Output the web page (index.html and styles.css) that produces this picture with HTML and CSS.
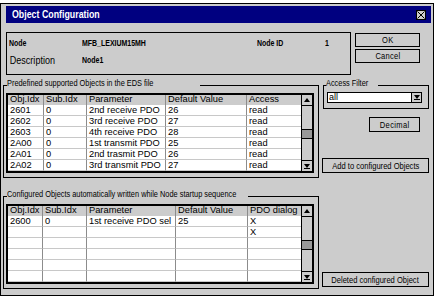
FILE: index.html
```html
<!DOCTYPE html>
<html>
<head>
<meta charset="utf-8">
<link rel="stylesheet" href="styles.css">
</head>
<body>
<div class="window">
  <div class="titlebar">
    <span class="title nx">Object Configuration</span>
    <span class="close"><svg width="8" height="8" viewBox="0 0 8 8"><path d="M0.5 0.5L7.5 7.5M7.5 0.5L0.5 7.5" stroke="#000" stroke-width="1" fill="none"/></svg></span>
  </div>

  <div class="row row-info">
    <div class="infobox">
      <span class="b nx">Node</span><span class="b nx">MFB_LEXIUM15MH</span><span class="b nx">Node ID</span><span class="b nx">1</span>
      <span class="desc nx">Description</span><span class="b nx">Node1</span>
    </div>
    <div class="btncol">
      <button class="btn btn-sm"><span>OK</span></button>
      <button class="btn btn-sm"><span>Cancel</span></button>
    </div>
  </div>

  <div class="row row-pre">
    <fieldset class="group group-main">
      <legend class="lg-pre"><span class="lg-text">Predefined supported Objects in the EDS file</span></legend>
      <div class="table">
        <div class="grid grid-pre">
          <div class="c h">Obj.Idx</div><div class="c h">Sub.Idx</div><div class="c h">Parameter</div><div class="c h">Default Value</div><div class="c h">Access</div>
          <div class="c">2601</div><div class="c">0</div><div class="c">2nd receive PDO</div><div class="c">26</div><div class="c">read</div>
          <div class="c">2602</div><div class="c">0</div><div class="c">3rd receive PDO</div><div class="c">27</div><div class="c">read</div>
          <div class="c">2603</div><div class="c">0</div><div class="c">4th receive PDO</div><div class="c">28</div><div class="c">read</div>
          <div class="c">2A00</div><div class="c">0</div><div class="c">1st transmit PDO</div><div class="c">25</div><div class="c">read</div>
          <div class="c">2A01</div><div class="c">0</div><div class="c">2nd trasmit PDO</div><div class="c">26</div><div class="c">read</div>
          <div class="c">2A02</div><div class="c">0</div><div class="c">3rd transmit PDO</div><div class="c">27</div><div class="c">read</div>
        </div>
        <div class="sb">
          <div class="sb-btn"><svg width="6" height="4" viewBox="0 0 6 4"><path d="M3 0L6 4H0Z" fill="#000"/></svg></div>
          <div class="sb-thumb"></div>
          <div class="sb-btn sb-down"><svg width="6" height="5" viewBox="0 0 6 5"><path d="M0 0H6L3 4Z" fill="#000"/><path d="M0 4.5H6" stroke="#000"/></svg></div>
        </div>
      </div>
    </fieldset>
    <div class="side">
      <fieldset class="group group-filter">
        <legend class="lg-filter"><span class="lg-text">Access Filter</span></legend>
        <div class="combo"><span class="combo-text">all</span><span class="drop"><svg width="6" height="5" viewBox="0 0 6 5"><path d="M0 0H6L3 4Z" fill="#000"/><path d="M0 4.5H6" stroke="#000"/></svg></span></div>
      </fieldset>
      <button class="btn btn-dec"><span>Decimal</span></button>
      <button class="btn btn-wide btn-add"><span>Add to configured Objects</span></button>
    </div>
  </div>

  <div class="row row-cfg">
    <fieldset class="group group-main">
      <legend class="lg-cfg"><span class="lg-text">Configured Objects automatically written while Node startup sequence</span></legend>
      <div class="table">
        <div class="grid grid-cfg">
          <div class="c h">Obj.Idx</div><div class="c h">Sub.Idx</div><div class="c h">Parameter</div><div class="c h">Default Value</div><div class="c h">PDO dialog</div>
          <div class="c">2600</div><div class="c">0</div><div class="c">1st receive PDO sel</div><div class="c">25</div><div class="c">X</div>
          <div class="c"></div><div class="c"></div><div class="c"></div><div class="c"></div><div class="c">X</div>
          <div class="c"></div><div class="c"></div><div class="c"></div><div class="c"></div><div class="c"></div>
          <div class="c"></div><div class="c"></div><div class="c"></div><div class="c"></div><div class="c"></div>
          <div class="c"></div><div class="c"></div><div class="c"></div><div class="c"></div><div class="c"></div>
          <div class="c"></div><div class="c"></div><div class="c"></div><div class="c"></div><div class="c"></div>
        </div>
        <div class="sb">
          <div class="sb-btn"><svg width="6" height="4" viewBox="0 0 6 4"><path d="M3 0L6 4H0Z" fill="#000"/></svg></div>
          <div class="sb-thumb"></div>
          <div class="sb-btn sb-down"><svg width="6" height="5" viewBox="0 0 6 5"><path d="M0 0H6L3 4Z" fill="#000"/><path d="M0 4.5H6" stroke="#000"/></svg></div>
        </div>
      </div>
    </fieldset>
    <div class="side side-cfg">
      <button class="btn btn-wide"><span>Deleted configured Object</span></button>
    </div>
  </div>
</div>
</body>
</html>
```

FILE: styles.css
```css
body {
  margin: 0;
  background: #fff;
  font-family: "Liberation Sans", Arial, sans-serif;
  color: #000;
}

.nx {
  display: inline-block;
  white-space: nowrap;
  transform: scaleX(0.82);
  transform-origin: 0 50%;
}

.window {
  box-sizing: border-box;
  width: 434px;
  height: 293px;
  margin-top: 3px;
  border: 1px solid #000;
  background: #cccccc;
  padding: 2px 0 0 2px;
  display: flex;
  flex-direction: column;
}

.titlebar {
  box-sizing: border-box;
  margin-left: 3px;
  width: 425px;
  height: 17px;
  background: #000080;
  display: flex;
  align-items: center;
  justify-content: space-between;
  padding: 0 5px 0 6px;
}

.title {
  color: #fff;
  font: bold 10.5px/17px "Liberation Sans", Arial, sans-serif;
  transform: scaleX(0.84);
}

.close {
  box-sizing: border-box;
  width: 10px;
  height: 10px;
  border: 1px solid #000;
  background: #cccccc;
  display: flex;
}

.row {
  display: flex;
}

.row-info {
  margin-top: 9px;
  margin-left: 3px;
}

.infobox {
  box-sizing: border-box;
  width: 345px;
  height: 43px;
  border: 1px solid #000;
  padding: 1px 0 0 2px;
  display: grid;
  grid-template-columns: 73px 175px 68px 1fr;
  grid-template-rows: 17px 17px;
  align-items: center;
}

.b {
  font: bold 8.5px/10px "Liberation Sans", Arial, sans-serif;
}

.desc {
  font: 11px/12px "Liberation Sans", Arial, sans-serif;
  padding-left: 1px;
}

.btncol {
  display: flex;
  flex-direction: column;
  gap: 2px;
  margin-left: 4px;
  margin-top: 1px;
}

.btn {
  box-sizing: border-box;
  border: 1px solid #000;
  background: #cccccc;
  color: #000;
  padding: 0;
  margin: 0;
  font: 9px/12px "Liberation Sans", Arial, sans-serif;
  white-space: nowrap;
  overflow: visible;
}

.btn span {
  display: inline-block;
  transform: scaleX(0.84);
}

.btn-sm {
  width: 65px;
  height: 14px;
  letter-spacing: 0.3px;
}

.row-pre {
  margin-top: 5px;
}

.row-cfg {
  margin-top: 13px;
}

.group {
  box-sizing: border-box;
  margin: 0;
  border: 1px solid #000;
  min-width: 0;
}

.group legend {
  box-sizing: border-box;
  height: 11px;
  padding: 0;
  font: 9px/7px "Liberation Sans", Arial, sans-serif;
  white-space: nowrap;
}

.lg-text {
  display: block;
  height: 7px;
  line-height: 7px;
  white-space: nowrap;
  transform: scaleX(0.82);
  transform-origin: 0 50%;
}

.group-main {
  width: 316px;
  padding: 2px 3px 4px 2px;
}

.group-main legend {
  margin-left: 1px;
}

.lg-pre {
  width: 193px;
}

.lg-cfg {
  width: 241px;
}

.table {
  box-sizing: border-box;
  display: flex;
  width: 308px;
  height: 80px;
  border: 2px solid #000;
  background: #fff;
}

.grid {
  display: grid;
  width: 293px;
  grid-template-rows: 10px repeat(6, 11px);
}

.grid-pre {
  grid-template-columns: 36px 43px 79px 81px 54px;
}

.grid-cfg {
  grid-template-columns: 35px 44px 89px 72px 53px;
}

.c {
  box-sizing: border-box;
  border-right: 1px solid #8c8c8c;
  border-bottom: 1px solid #c8c8c8;
  padding-left: 2px;
  font: 9.3px/10px "Liberation Sans", Arial, sans-serif;
  white-space: nowrap;
  overflow: hidden;
  background: #fff;
}

.c:nth-child(5n) {
  border-right: none;
}

.h {
  background: #cccccc;
  line-height: 9px;
  border-bottom: none;
}

.sb {
  box-sizing: border-box;
  width: 11px;
  border-left: 1px solid #000;
  background: #cccccc;
  display: flex;
  flex-direction: column;
}

.sb-btn {
  height: 10px;
  border-bottom: 1px solid #000;
  display: flex;
  align-items: center;
  justify-content: center;
}

.sb-thumb {
  height: 10px;
  box-sizing: border-box;
  margin-top: 23px;
  background: #999999;
  border-top: 1px solid #000;
  border-bottom: 1px solid #000;
}

.sb-down {
  margin-top: auto;
  border-bottom: none;
  border-top: 1px solid #000;
}

.side {
  display: flex;
  flex-direction: column;
  margin-left: 3px;
}

.group-filter {
  width: 106px;
  margin-left: 1px;
  padding: 1px 3px 5px 1px;
}

.group-filter legend {
  margin-left: 1px;
}

.lg-filter {
  width: 52px;
}

.combo {
  box-sizing: border-box;
  display: flex;
  width: 95px;
  height: 11px;
  margin-left: 2px;
  border: 1px solid #000;
  background: #fff;
}

.combo-text {
  padding-left: 1px;
  font: 9px/9px "Liberation Sans", Arial, sans-serif;
}

.drop {
  margin-left: auto;
  width: 9px;
  border-left: 1px solid #000;
  background: #cccccc;
  display: flex;
  align-items: center;
  justify-content: center;
}

.btn-dec {
  width: 51px;
  height: 15px;
  margin-top: 8px;
  margin-left: 47px;
  letter-spacing: 0.4px;
}

.btn-wide {
  width: 107px;
  height: 15px;
}

.btn-add {
  margin-top: 26px;
}

.side-cfg {
  justify-content: flex-end;
  padding-bottom: 2px;
}
```
